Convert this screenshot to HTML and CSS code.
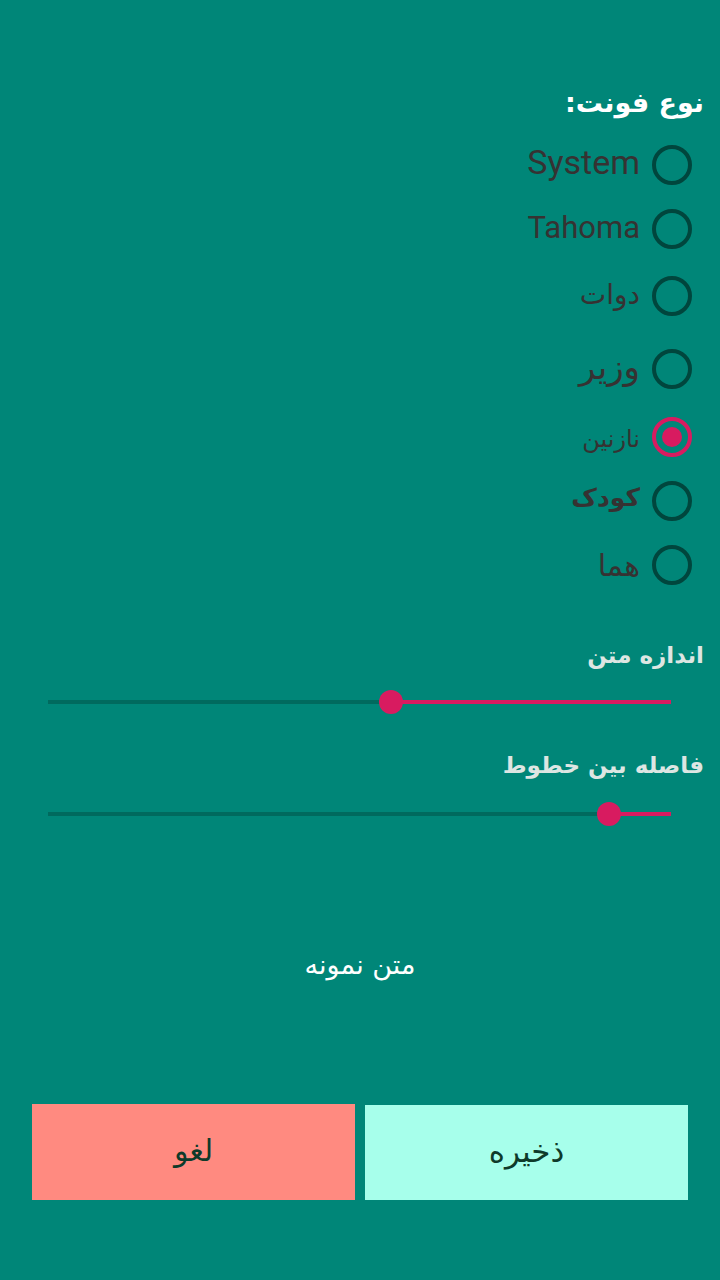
FILE: index.html
```html
<!DOCTYPE html>
<html lang="fa" dir="rtl">
<head>
<meta charset="utf-8">
<title>تنظیمات فونت</title>
<link rel="stylesheet" href="styles.css">
</head>
<body>
<main class="page">
  <h1 class="title">نوع فونت:</h1>
  <ul class="radios">
    <li class="row r1"><span class="radio"></span><span class="label latin l-system">System</span></li>
    <li class="row r2"><span class="radio"></span><span class="label latin l-tahoma">Tahoma</span></li>
    <li class="row r3"><span class="radio"></span><span class="label l-davat">دوات</span></li>
    <li class="row r4"><span class="radio"></span><span class="label l-vazir">وزیر</span></li>
    <li class="row r5"><span class="radio checked"></span><span class="label l-nazanin">نازنین</span></li>
    <li class="row r6"><span class="radio"></span><span class="label l-koodak">کودک</span></li>
    <li class="row r7"><span class="radio"></span><span class="label l-homa">هما</span></li>
  </ul>

  <h2 class="section first">اندازه متن</h2>
  <div class="slider s1">
    <div class="track">
      <div class="fill" style="width:44.9%"></div>
      <div class="thumb" style="right:44.9%"></div>
    </div>
  </div>

  <h2 class="section second">فاصله بین خطوط</h2>
  <div class="slider s2">
    <div class="track">
      <div class="fill" style="width:9.95%"></div>
      <div class="thumb" style="right:9.95%"></div>
    </div>
  </div>

  <p class="sample">متن نمونه</p>

  <div class="buttons">
    <button class="btn save">ذخیره</button>
    <button class="btn cancel">لغو</button>
  </div>
</main>
</body>
</html>
```

FILE: styles.css
```css
html, body {
  margin: 0;
  padding: 0;
}
body {
  width: 720px;
  height: 1280px;
  background: #008678;
  font-family: "DejaVu Sans", "Noto Sans", sans-serif;
  overflow: hidden;
}
.page {
  display: flex;
  flex-direction: column;
  padding-top: 78px;
}
.title {
  margin: 0;
  padding-right: 16px;
  height: 55px;
  line-height: 50px;
  font-size: 27px;
  font-weight: bold;
  color: #ffffff;
}
.radios {
  list-style: none;
  margin: 0;
  padding: 0 28px 0 0;
  display: flex;
  flex-direction: column;
}
.row {
  display: flex;
  align-items: center;
  gap: 12px;
}
.r1 { height: 64px; }
.r2 { height: 64px; }
.r3 { height: 70px; }
.r4 { height: 76px; }
.r5 { height: 60px; }
.r6 { height: 68px; }
.r7 { height: 60px; }
.radio {
  width: 40px;
  height: 40px;
  box-sizing: border-box;
  border: 4px solid #00463d;
  border-radius: 50%;
  display: flex;
  align-items: center;
  justify-content: center;
  flex: none;
}
.radio.checked {
  border-color: #d81b60;
}
.radio.checked::after {
  content: "";
  width: 20px;
  height: 20px;
  border-radius: 50%;
  background: #d81b60;
}
.label {
  color: #363232;
  line-height: 1.2;
}
.latin {
  font-family: Roboto, "Liberation Sans", sans-serif;
}
.l-system { font-size: 34px; margin-top: -6px; }
.l-tahoma { font-size: 31px; margin-top: -2px; }
.l-davat { font-size: 28px; margin-top: -2px; }
.l-vazir { font-size: 34px; margin-top: -4px; }
.l-nazanin { font-size: 24px; margin-top: 4px; }
.l-koodak { font-size: 25px; font-weight: bold; margin-top: -6px; }
.l-homa { font-size: 30px; margin-top: 2px; }

.section {
  margin: 0;
  padding-right: 16px;
  height: 40px;
  line-height: 40px;
  font-size: 23px;
  font-weight: bold;
  color: #dde6e3;
}
.section.first { margin-top: 40px; }
.section.second { margin-top: 19px; }

.slider {
  height: 48px;
  padding: 0 49px 0 48px;
  display: flex;
  align-items: center;
}
.s1 { margin-top: 3px; }
.s2 { margin-top: 5px; }
.track {
  position: relative;
  flex: 1;
  height: 4px;
  background: #006a5e;
}
.fill {
  position: absolute;
  right: 0;
  top: 0;
  height: 4px;
  background: #d81b60;
}
.thumb {
  position: absolute;
  top: 50%;
  width: 24px;
  height: 24px;
  margin-top: -12px;
  margin-right: -12px;
  border-radius: 50%;
  background: #d81b60;
}

.sample {
  margin: 107px 0 0 0;
  height: 40px;
  line-height: 40px;
  text-align: center;
  font-size: 27px;
  color: #ffffff;
}

.buttons {
  display: flex;
  gap: 10px;
  padding: 0 32px;
  margin-top: 119px;
}
.btn {
  flex: 1;
  height: 96px;
  border: none;
  margin: 0;
  padding: 0 0 4px 0;
  font-family: "DejaVu Sans", sans-serif;
  font-size: 30px;
  color: #0e3a2a;
}
.save {
  background: #a7ffeb;
  margin-top: 1px;
  height: 95px;
  font-size: 31px;
}
.cancel {
  background: #ff8a80;
}
```
